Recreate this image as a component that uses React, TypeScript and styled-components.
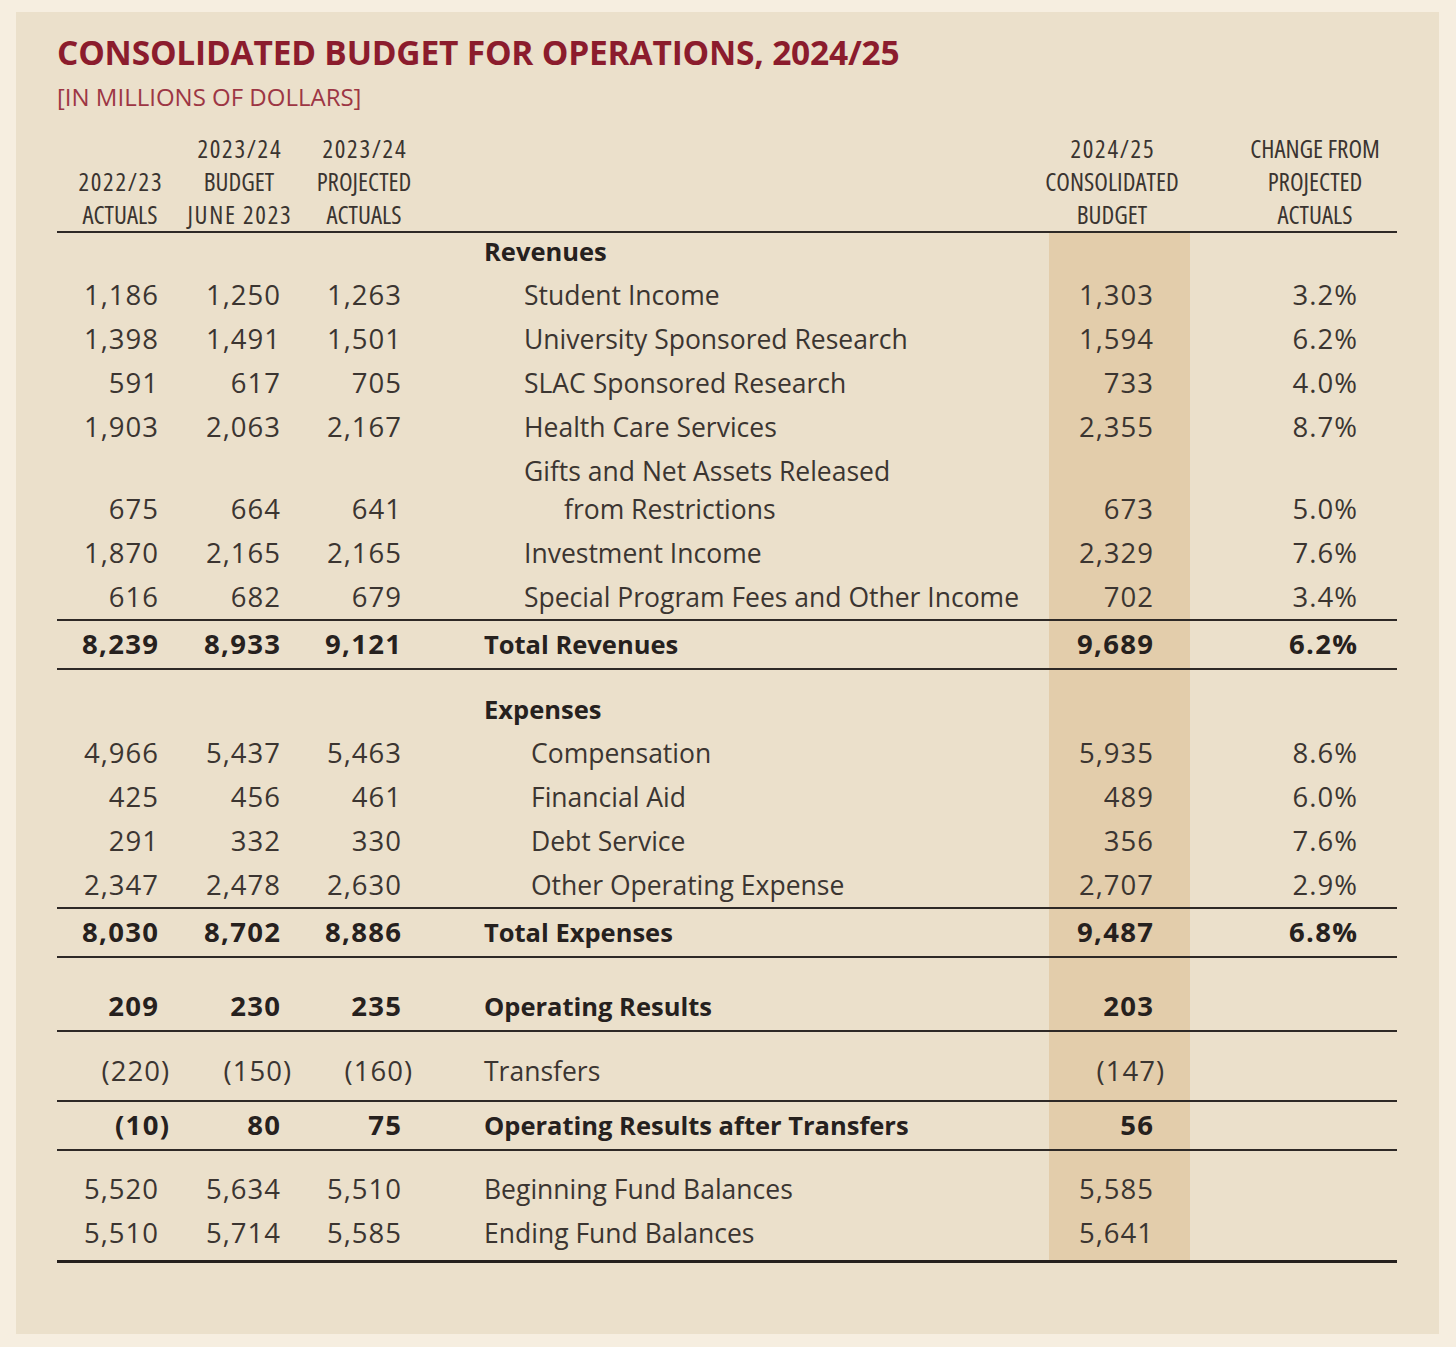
import React from "react";
import styled, { createGlobalStyle } from "styled-components";

const GlobalStyle = createGlobalStyle`
  html, body { margin: 0; padding: 0; background: #f6eee0; }
  body { font-family: "Open Sans", "Noto Sans", sans-serif; color: #37312d; }
`;

const Page = styled.div`
  padding: 12px 17px 15px 16px;
  background: #f6eee0;
`;

const Panel = styled.section`
  background: #ebe0cb;
  padding: 20px 42px 71px 41px;
`;

const Title = styled.h1`
  margin: 0;
  font-family: "Open Sans", "Noto Sans", sans-serif;
  font-weight: 700;
  font-size: 33.5px;
  line-height: 40px;
  color: #8b1c2d;
  letter-spacing: -0.2px;
`;

const Subtitle = styled.div`
  margin-top: 10px;
  font-size: 24px;
  line-height: 30px;
  color: #9d3644;
  font-weight: 400;
`;

const COLS = "113px 122px 121px 636px 141px 207px";

const Table = styled.div`
  margin-top: 20px;
  display: flex;
  flex-direction: column;
`;

const HeaderRow = styled.div`
  display: grid;
  grid-template-columns: ${COLS};
  border-bottom: 2px solid #2e2926;
`;

const HeadCell = styled.div<{ $shift?: number }>`
  text-align: center;
  font-size: 25px;
  line-height: 33px;
  font-stretch: 75%;
  color: #3a3430;
  align-self: end;
  margin: 0 -40px;
  padding-left: ${(p) => (p.$shift && p.$shift > 0 ? p.$shift : 0)}px;
  padding-right: ${(p) => (p.$shift && p.$shift < 0 ? -p.$shift : 0)}px;
  white-space: nowrap;
`;

const HeadDigits = styled.span`
  letter-spacing: 1.7px;
  margin-right: -1.7px;
`;

const Row = styled.div<{ $rule?: string }>`
  display: grid;
  grid-template-columns: ${COLS};
  border-bottom: ${(p) => p.$rule || "none"};
`;

const Cell = styled.div<{ $bold?: boolean; $top?: number; $bottom?: number; $lh?: number }>`
  font-size: 26.5px;
  line-height: ${(p) => p.$lh || 44}px;
  font-weight: ${(p) => (p.$bold ? 700 : 400)};
  color: ${(p) => (p.$bold ? "#26211e" : "#3b3531")};
  padding-top: ${(p) => p.$top || 0}px;
  padding-bottom: ${(p) => p.$bottom || 0}px;
  display: flex;
  align-items: flex-end;
  white-space: nowrap;
`;

const NumCell = styled(Cell)`
  justify-content: flex-end;
  padding-right: 12px;
  font-size: 27.5px;
`;

const HiCell = styled(NumCell)`
  background: #e3cdab;
  padding-right: 37px;
`;

const ChangeCell = styled(NumCell)`
  padding-right: 40px;
`;

const LabelCell = styled(Cell)<{ $indent?: number }>`
  padding-left: ${(p) => 71 + (p.$indent || 0)}px;
  font-size: ${(p) => (p.$bold ? "25.5px" : "26.5px")};
  flex-direction: column;
  align-items: flex-start;
  justify-content: flex-end;
`;

const Wrap = styled.span`
  display: block;
  line-height: 38px;
  &:first-child { margin-top: 3px; }
  &:last-child { line-height: 44px; padding-left: 40px; margin-top: -3px; }
`;

const Digits = styled.span<{ $bold?: boolean }>`
  letter-spacing: ${(p) => (p.$bold ? 1.3 : 1)}px;
  margin-right: ${(p) => (p.$bold ? -1.3 : -1)}px;
`;

const Paren = styled.span`
  margin-right: -11px;
`;

const Num = ({ v, bold }: { v?: string; bold?: boolean }) => {
  if (!v) return null;
  if (v.startsWith("(")) {
    return (
      <Digits $bold={bold}>
        {v.slice(0, -1)}
        <Paren>)</Paren>
      </Digits>
    );
  }
  return <Digits $bold={bold}>{v}</Digits>;
};

type Line = {
  label: string | string[];
  vals: [string, string, string];
  hi: string;
  chg?: string;
  bold?: boolean;
  indent?: number;
  top?: number;
  bottom?: number;
  rule?: string;
};

const thin = "2px solid #2e2926";
const thick = "3px solid #25201d";

const revenues: Line[] = [
  { label: "Student Income", vals: ["1,186", "1,250", "1,263"], hi: "1,303", chg: "3.2%", indent: 40 },
  { label: "University Sponsored Research", vals: ["1,398", "1,491", "1,501"], hi: "1,594", chg: "6.2%", indent: 40 },
  { label: "SLAC Sponsored Research", vals: ["591", "617", "705"], hi: "733", chg: "4.0%", indent: 40 },
  { label: "Health Care Services", vals: ["1,903", "2,063", "2,167"], hi: "2,355", chg: "8.7%", indent: 40 },
  { label: ["Gifts and Net Assets Released", "from Restrictions"], vals: ["675", "664", "641"], hi: "673", chg: "5.0%", indent: 40 },
  { label: "Investment Income", vals: ["1,870", "2,165", "2,165"], hi: "2,329", chg: "7.6%", indent: 40 },
  { label: "Special Program Fees and Other Income", vals: ["616", "682", "679"], hi: "702", chg: "3.4%", indent: 40, rule: thin },
  { label: "Total Revenues", vals: ["8,239", "8,933", "9,121"], hi: "9,689", chg: "6.2%", bold: true, top: 1, bottom: 2, rule: thin },
];

const expenses: Line[] = [
  { label: "Compensation", vals: ["4,966", "5,437", "5,463"], hi: "5,935", chg: "8.6%", indent: 47 },
  { label: "Financial Aid", vals: ["425", "456", "461"], hi: "489", chg: "6.0%", indent: 47 },
  { label: "Debt Service", vals: ["291", "332", "330"], hi: "356", chg: "7.6%", indent: 47 },
  { label: "Other Operating Expense", vals: ["2,347", "2,478", "2,630"], hi: "2,707", chg: "2.9%", indent: 47, rule: thin },
  { label: "Total Expenses", vals: ["8,030", "8,702", "8,886"], hi: "9,487", chg: "6.8%", bold: true, top: 1, bottom: 2, rule: thin },
  { label: "Operating Results", vals: ["209", "230", "235"], hi: "203", bold: true, top: 26, bottom: 2, rule: thin },
  { label: "Transfers", vals: ["(220)", "(150)", "(160)"], hi: "(147)", top: 17, bottom: 7, rule: thin },
  { label: "Operating Results after Transfers", vals: ["(10)", "80", "75"], hi: "56", bold: true, top: 1, bottom: 2, rule: thin },
  { label: "Beginning Fund Balances", vals: ["5,520", "5,634", "5,510"], hi: "5,585", top: 16 },
  { label: "Ending Fund Balances", vals: ["5,510", "5,714", "5,585"], hi: "5,641", bottom: 5, rule: thick },
];

const DataRow = ({ l }: { l: Line }) => (
  <Row $rule={l.rule}>
    {l.vals.map((v, i) => (
      <NumCell key={i} $bold={l.bold} $top={l.top} $bottom={l.bottom}>
        <Num v={v} bold={l.bold} />
      </NumCell>
    ))}
    <LabelCell $bold={l.bold} $top={l.top} $bottom={l.bottom} $indent={l.indent}>
      {Array.isArray(l.label) ? l.label.map((t) => <Wrap key={t}>{t}</Wrap>) : l.label}
    </LabelCell>
    <HiCell $bold={l.bold} $top={l.top} $bottom={l.bottom}>
      <Num v={l.hi} bold={l.bold} />
    </HiCell>
    <ChangeCell $bold={l.bold} $top={l.top} $bottom={l.bottom}>
      <Num v={l.chg} bold={l.bold} />
    </ChangeCell>
  </Row>
);

const SectionRow = ({ label, top, bottom, lh }: { label: string; top: number; bottom: number; lh: number }) => (
  <Row>
    <Cell $top={top} $bottom={bottom} $lh={lh} />
    <Cell $top={top} $bottom={bottom} $lh={lh} />
    <Cell $top={top} $bottom={bottom} $lh={lh} />
    <LabelCell $bold $top={top} $bottom={bottom} $lh={lh}>
      {label}
    </LabelCell>
    <HiCell $top={top} $bottom={bottom} $lh={lh} />
    <Cell $top={top} $bottom={bottom} $lh={lh} />
  </Row>
);

const Head = ({ lines, shift }: { lines: string[]; shift?: number }) => (
  <HeadCell $shift={shift}>
    {lines.map((t, i) => (
      <React.Fragment key={i}>
        {i > 0 && <br />}
        {/\d/.test(t) ? <HeadDigits>{t}</HeadDigits> : t}
      </React.Fragment>
    ))}
  </HeadCell>
);

export default function App() {
  return (
    <>
      <GlobalStyle />
      <Page>
        <Panel>
          <Title>CONSOLIDATED BUDGET FOR OPERATIONS, 2024/25</Title>
          <Subtitle>[IN MILLIONS OF DOLLARS]</Subtitle>
          <Table>
            <HeaderRow>
              <Head lines={["2022/23", "ACTUALS"]} shift={13} />
              <Head lines={["2023/24", "BUDGET", "JUNE 2023"]} shift={16} />
              <Head lines={["2023/24", "PROJECTED", "ACTUALS"]} shift={23} />
              <HeadCell />
              <Head lines={["2024/25", "CONSOLIDATED", "BUDGET"]} shift={-15} />
              <Head lines={["CHANGE FROM", "PROJECTED", "ACTUALS"]} shift={43} />
            </HeaderRow>
            <SectionRow label="Revenues" top={0} bottom={4} lh={36} />
            {revenues.map((l, i) => (
              <DataRow key={i} l={l} />
            ))}
            <SectionRow label="Expenses" top={17} bottom={0} lh={44} />
            {expenses.map((l, i) => (
              <DataRow key={i} l={l} />
            ))}
          </Table>
        </Panel>
      </Page>
    </>
  );
}
